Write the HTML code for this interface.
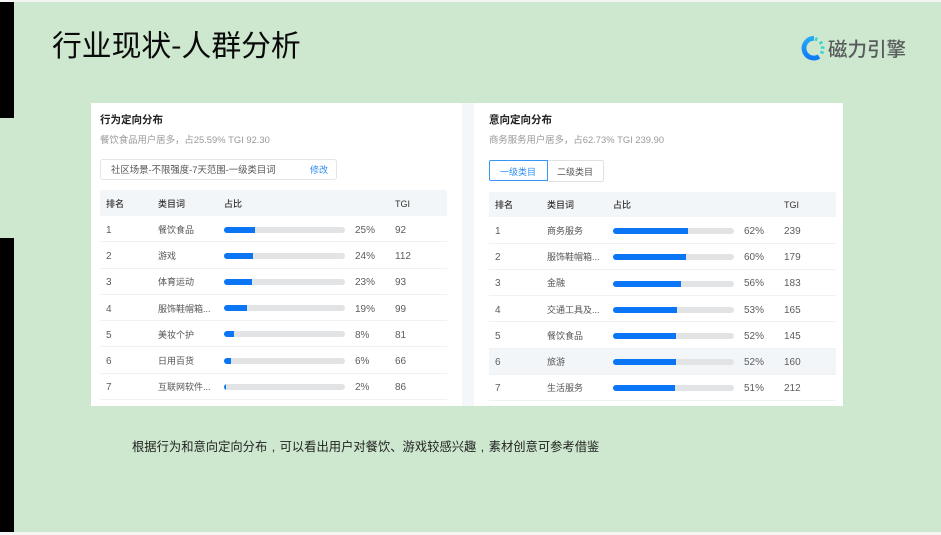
<!DOCTYPE html>
<html lang="zh">
<head>
<meta charset="utf-8">
<style>
html,body{margin:0;padding:0;width:941px;height:535px;overflow:hidden;background:#f3f6f4}
body{position:relative;font-family:"Liberation Sans","Noto Sans CJK SC",sans-serif}
div,span{position:absolute;white-space:nowrap}
.t{font-size:9px;line-height:12px;color:#555;margin-top:1px}
.t.n{font-size:10px;color:#5c5c5c;margin-top:2px}
.h{font-size:9px;line-height:12px;color:#333;font-weight:500;margin-top:1px}
.sep{height:1px;background:#f0f1f3}
.tr{height:6px;background:#e2e3e5;border-radius:3px;overflow:hidden;width:121px}
.fl{left:0;top:0;height:6px;background:#0a75f5}
i{font-style:normal;display:inline-block;width:12.3px;text-align:center;font-family:"Liberation Sans",sans-serif}
</style>
</head>
<body>
<div style="left:0;top:2px;width:941px;height:530px;background:#cde8cf"></div>
<div style="left:0;top:2px;width:14px;height:116px;background:#000"></div>
<div style="left:0;top:238px;width:14px;height:294px;background:#000"></div>

<div style="left:52px;top:24px;font-size:29.8px;line-height:38px;color:#0a0a0a;font-family:'WenQuanYi Zen Hei','Noto Sans CJK SC',sans-serif">行业现状-人群分析</div>

<svg style="position:absolute;left:799px;top:35px" width="28" height="28" viewBox="0 0 28 28">
<defs><linearGradient id="g" x1="0" y1="0" x2="0" y2="1"><stop offset="0" stop-color="#27a8f2"/><stop offset="1" stop-color="#0f7cf6"/></linearGradient></defs>
<path d="M15 3.4A9.8 9.8 0 1 0 20 21.5" fill="none" stroke="url(#g)" stroke-width="4.8"/>
<g stroke="#35d4cf" stroke-width="2.4" fill="none">
<path d="M17.8 2.6l-1.2 3.2"/><path d="M23.4 6.8l-3 2"/><path d="M25.4 12.6h-3.6"/><path d="M24.6 18l-3.2-1.4"/>
</g>
</svg>
<div style="left:828px;top:38px;font-size:19.5px;line-height:24px;color:#575b5c;font-weight:500">磁力引擎</div>

<div style="left:91px;top:103px;width:752px;height:303px;background:#fff"></div>
<div style="left:462px;top:103px;width:12px;height:303px;background:#f3f7fa"></div>

<div style="left:100px;top:113px;font-size:10.5px;line-height:14px;font-weight:700;color:#222">行为定向分布</div>
<div style="left:100px;top:133px;font-size:9.4px;line-height:13px;color:#999">餐饮食品用户居多，占25.59% TGI 92.30</div>
<div style="left:100px;top:159px;width:235px;height:19px;border:1px solid #e3e5e8;border-radius:3px;background:#fff"></div>
<div class="t" style="left:111px;top:163px;font-size:9.4px">社区场景-不限强度-7天范围-一级类目词</div>
<div class="t" style="left:310px;top:163px;color:#2e8cf0">修改</div>

<div style="left:100px;top:190px;width:347px;height:26px;background:#f3f6f9;border-radius:2px 2px 0 0"></div>
<div class="h" style="left:106px;top:197px">排名</div>
<div class="h" style="left:158px;top:197px">类目词</div>
<div class="h" style="left:224px;top:197px">占比</div>
<div class="h" style="left:395px;top:197px">TGI</div>

<div class="t n" style="left:106px;top:223px">1</div><div class="t" style="left:158px;top:223px">餐饮食品</div><div class="tr" style="left:223.5px;top:227px"><div class="fl" style="width:31px"></div></div><div class="t n" style="left:355px;top:223px">25%</div><div class="t n" style="left:395px;top:223px">92</div><div class="sep" style="left:100px;top:241px;width:347px"></div>
<div class="t n" style="left:106px;top:249px">2</div><div class="t" style="left:158px;top:249px">游戏</div><div class="tr" style="left:223.5px;top:253px"><div class="fl" style="width:29px"></div></div><div class="t n" style="left:355px;top:249px">24%</div><div class="t n" style="left:395px;top:249px">112</div><div class="sep" style="left:100px;top:268px;width:347px"></div>
<div class="t n" style="left:106px;top:275px">3</div><div class="t" style="left:158px;top:275px">体育运动</div><div class="tr" style="left:223.5px;top:279px"><div class="fl" style="width:28px"></div></div><div class="t n" style="left:355px;top:275px">23%</div><div class="t n" style="left:395px;top:275px">93</div><div class="sep" style="left:100px;top:294px;width:347px"></div>
<div class="t n" style="left:106px;top:302px">4</div><div class="t" style="left:158px;top:302px">服饰鞋帽箱...</div><div class="tr" style="left:223.5px;top:305px"><div class="fl" style="width:23px"></div></div><div class="t n" style="left:355px;top:302px">19%</div><div class="t n" style="left:395px;top:302px">99</div><div class="sep" style="left:100px;top:320px;width:347px"></div>
<div class="t n" style="left:106px;top:328px">5</div><div class="t" style="left:158px;top:328px">美妆个护</div><div class="tr" style="left:223.5px;top:331px"><div class="fl" style="width:10px"></div></div><div class="t n" style="left:355px;top:328px">8%</div><div class="t n" style="left:395px;top:328px">81</div><div class="sep" style="left:100px;top:346px;width:347px"></div>
<div class="t n" style="left:106px;top:354px">6</div><div class="t" style="left:158px;top:354px">日用百货</div><div class="tr" style="left:223.5px;top:358px"><div class="fl" style="width:7px"></div></div><div class="t n" style="left:355px;top:354px">6%</div><div class="t n" style="left:395px;top:354px">66</div><div class="sep" style="left:100px;top:373px;width:347px"></div>
<div class="t n" style="left:106px;top:380px">7</div><div class="t" style="left:158px;top:380px">互联网软件...</div><div class="tr" style="left:223.5px;top:384px"><div class="fl" style="width:2.5px"></div></div><div class="t n" style="left:355px;top:380px">2%</div><div class="t n" style="left:395px;top:380px">86</div><div class="sep" style="left:100px;top:399px;width:347px"></div>

<div style="left:489px;top:113px;font-size:10.5px;line-height:14px;font-weight:700;color:#222">意向定向分布</div>
<div style="left:489px;top:133px;font-size:9.4px;line-height:13px;color:#999">商务服务用户居多，占62.73% TGI 239.90</div>
<div style="left:547px;top:160px;width:56px;height:20px;border:1px solid #dfe1e4;border-left:0;border-radius:0 2px 2px 0"></div>
<div style="left:489px;top:160px;width:57px;height:19px;border:1px solid #3a96f5;border-radius:2px 0 0 2px"></div>
<div class="t" style="left:500px;top:165px;color:#2e8cf0">一级类目</div>
<div class="t" style="left:557px;top:165px">二级类目</div>

<div style="left:489px;top:192px;width:347px;height:25px;background:#f3f6f9;border-radius:2px 2px 0 0"></div>
<div class="h" style="left:495px;top:198px">排名</div>
<div class="h" style="left:547px;top:198px">类目词</div>
<div class="h" style="left:613px;top:198px">占比</div>
<div class="h" style="left:784px;top:198px">TGI</div>

<div class="t n" style="left:495px;top:224px">1</div><div class="t" style="left:547px;top:224px">商务服务</div><div class="tr" style="left:613px;top:228px"><div class="fl" style="width:75px"></div></div><div class="t n" style="left:744px;top:224px">62%</div><div class="t n" style="left:784px;top:224px">239</div><div class="sep" style="left:489px;top:243px;width:347px"></div>
<div class="t n" style="left:495px;top:250px">2</div><div class="t" style="left:547px;top:250px">服饰鞋帽箱...</div><div class="tr" style="left:613px;top:254px"><div class="fl" style="width:73px"></div></div><div class="t n" style="left:744px;top:250px">60%</div><div class="t n" style="left:784px;top:250px">179</div><div class="sep" style="left:489px;top:269px;width:347px"></div>
<div class="t n" style="left:495px;top:276px">3</div><div class="t" style="left:547px;top:276px">金融</div><div class="tr" style="left:613px;top:281px"><div class="fl" style="width:68px"></div></div><div class="t n" style="left:744px;top:276px">56%</div><div class="t n" style="left:784px;top:276px">183</div><div class="sep" style="left:489px;top:295px;width:347px"></div>
<div class="t n" style="left:495px;top:303px">4</div><div class="t" style="left:547px;top:303px">交通工具及...</div><div class="tr" style="left:613px;top:307px"><div class="fl" style="width:64px"></div></div><div class="t n" style="left:744px;top:303px">53%</div><div class="t n" style="left:784px;top:303px">165</div><div class="sep" style="left:489px;top:321px;width:347px"></div>
<div class="t n" style="left:495px;top:329px">5</div><div class="t" style="left:547px;top:329px">餐饮食品</div><div class="tr" style="left:613px;top:333px"><div class="fl" style="width:63px"></div></div><div class="t n" style="left:744px;top:329px">52%</div><div class="t n" style="left:784px;top:329px">145</div><div class="sep" style="left:489px;top:348px;width:347px"></div>
<div style="left:489px;top:349px;width:347px;height:25px;background:#f3f6f9"></div>
<div class="t n" style="left:495px;top:355px">6</div><div class="t" style="left:547px;top:355px">旅游</div><div class="tr" style="left:613px;top:359px"><div class="fl" style="width:63px"></div></div><div class="t n" style="left:744px;top:355px">52%</div><div class="t n" style="left:784px;top:355px">160</div><div class="sep" style="left:489px;top:374px;width:347px"></div>
<div class="t n" style="left:495px;top:381px">7</div><div class="t" style="left:547px;top:381px">生活服务</div><div class="tr" style="left:613px;top:385px"><div class="fl" style="width:62px"></div></div><div class="t n" style="left:744px;top:381px">51%</div><div class="t n" style="left:784px;top:381px">212</div><div class="sep" style="left:489px;top:400px;width:347px"></div>

<div style="left:132px;top:438px;font-size:12.3px;line-height:16px;color:#222;font-family:'WenQuanYi Zen Hei','Noto Sans CJK SC',sans-serif">根据行为和意向定向分布<i>,</i>可以看出用户对餐饮、游戏较感兴趣<i>,</i>素材创意可参考借鉴</div>
</body>
</html>
